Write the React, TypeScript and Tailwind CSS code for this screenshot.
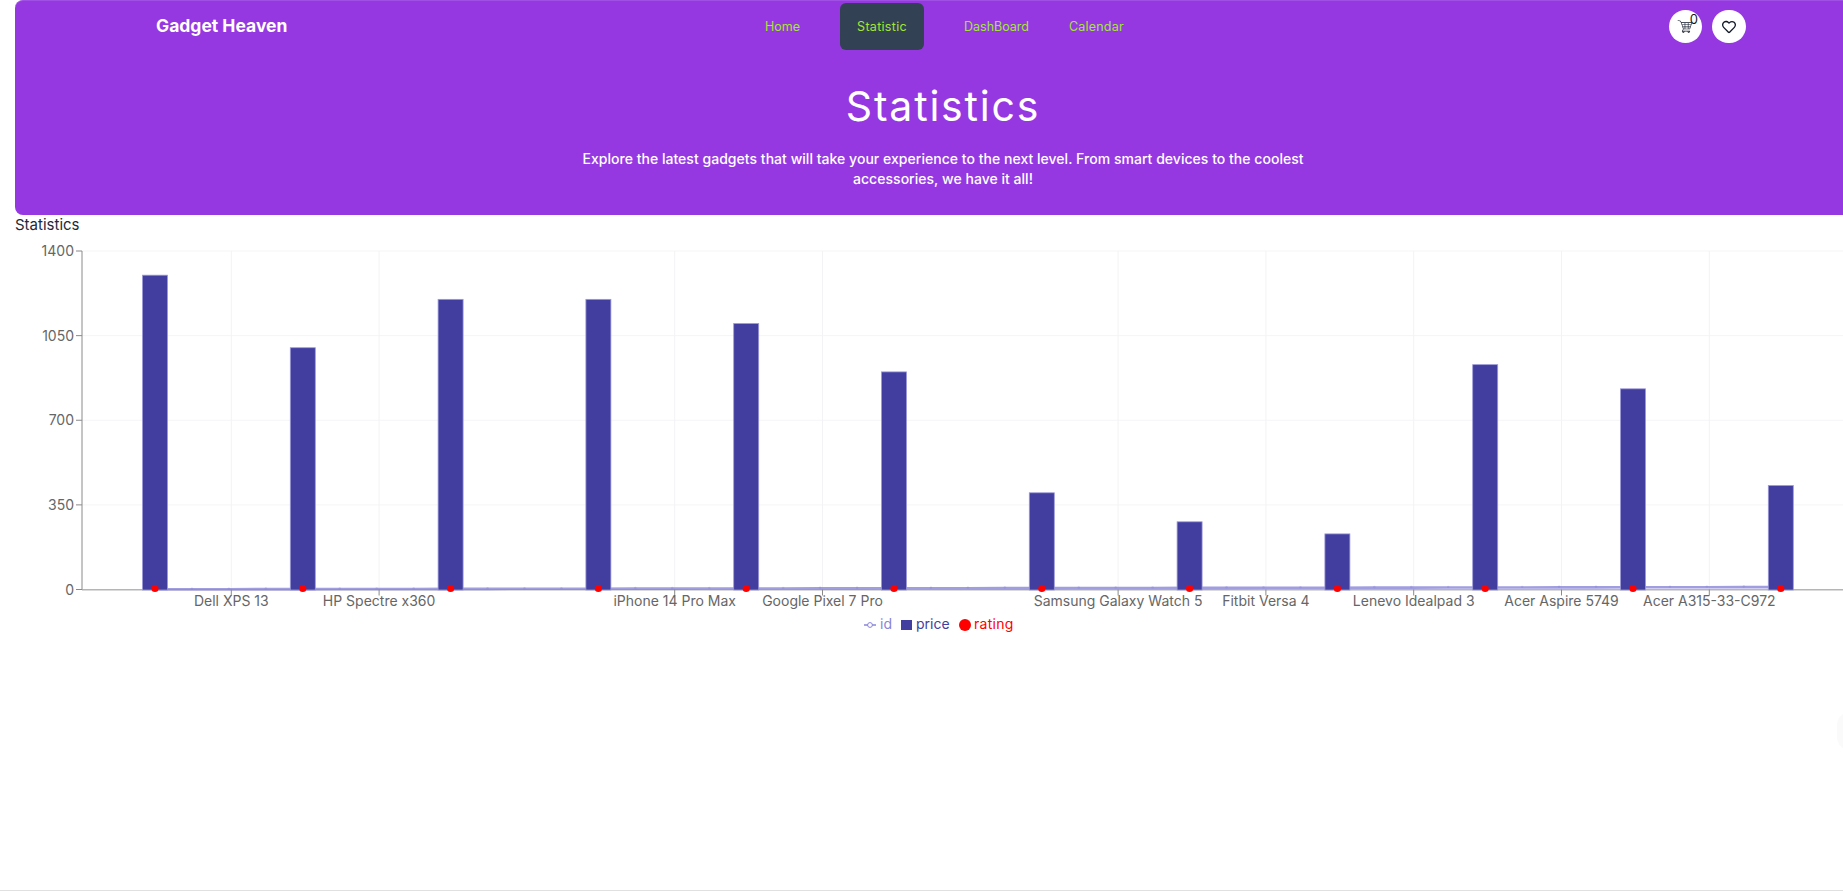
import { FaRegHeart } from "react-icons/fa";
import { GiShoppingCart } from "react-icons/gi";

const font = "font-['Inter','Noto_Sans',sans-serif]";

const bars = [1300, 1000, 1200, 1200, 1100, 900, 400, 280, 230, 930, 830, 430];
const labels = [
    "Dell XPS 13",
    "HP Spectre x360",
    "",
    "iPhone 14 Pro Max",
    "Google Pixel 7 Pro",
    "",
    "Samsung Galaxy Watch 5",
    "Fitbit Versa 4",
    "Lenevo Idealpad 3",
    "Acer Aspire 5749",
    "Acer A315-33-C972",
];
const yTicks = [0, 350, 700, 1050, 1400];

const BASE = 589.5;
const SCALE = 338.5 / 1400;
const BAND = 147.8;
const yOf = (v: number) => BASE - v * SCALE;
const barX = (i: number) => 155 + BAND * i;
const tickX = (i: number) => 231.3 + BAND * i;

// the id line has 4 points per band
const linePts = Array.from({ length: 45 }, (_, i) => ({
    x: 155 + (BAND / 4) * i,
    y: BASE - 0.2 - (2.2 * i) / 44,
}));

const Chart = () => {
    return (
        <svg width="1828" height="460" viewBox="15 236 1828 460" className="block">
            {yTicks.slice(1).map((t) => (
                <line key={t} x1="82" x2="1843" y1={yOf(t)} y2={yOf(t)} stroke="#f5f5f7" />
            ))}
            {labels.map((l, i) =>
                l ? <line key={i} x1={tickX(i)} x2={tickX(i)} y1="251" y2={BASE} stroke="#f3f3f5" /> : null,
            )}
            <line x1="82" x2="1843" y1={BASE + 0.3} y2={BASE + 0.3} stroke="#b5b5b5" strokeWidth="1.5" />
            <line x1="82" x2="82" y1="251" y2={BASE} stroke="#8a8a8a" />
            <polyline points={linePts.map((p) => `${p.x},${p.y}`).join(" ")} fill="none" stroke="#8884d8" strokeWidth="2.6" opacity="0.8" />
            {linePts.map((p, i) => (
                <circle key={i} cx={p.x} cy={p.y - 0.6} r="1.2" fill="#8884d8" opacity="0.35" />
            ))}
            {bars.map((b, i) => (
                <rect key={i} x={barX(i) - 12.5} y={yOf(b)} width="25" height={BASE - yOf(b) + 0.5} fill="#413ea0" stroke="#9c99d8" strokeWidth="0.8" />
            ))}
            {yTicks.map((t) => (
                <g key={t}>
                    <line x1="76" x2="82" y1={yOf(t)} y2={yOf(t)} stroke="#8a8a8a" />
                    <text x="74" y={yOf(t) + 5} textAnchor="end" fontSize="14" fill="#666666">
                        {t}
                    </text>
                </g>
            ))}
            {labels.map((l, i) =>
                l ? (
                    <g key={i}>
                        <line x1={tickX(i)} x2={tickX(i)} y1={BASE} y2={BASE + 6} stroke="#8a8a8a" />
                        <text x={tickX(i)} y={BASE + 16.5} textAnchor="middle" fontSize="14" fill="#666666">
                            {l}
                        </text>
                    </g>
                ) : null,
            )}
            {bars.map((_, i) => (
                <circle key={i} cx={barX(i)} cy={BASE - 1} r="3.6" fill="#ff0000" />
            ))}
            <g fontSize="14">
                <line x1="864" x2="876" y1="625" y2="625" stroke="#8884d8" strokeWidth="1.5" />
                <circle cx="870" cy="625" r="2.4" fill="#ffffff" stroke="#8884d8" />
                <text x="880" y="629" fill="#8884d8">id</text>
                <rect x="901" y="620" width="11" height="10" fill="#413ea0" />
                <text x="916" y="629" fill="#413ea0">price</text>
                <circle cx="965" cy="625" r="6" fill="#ff0000" />
                <text x="974" y="629" fill="#ff0000" letterSpacing="0.3">rating</text>
            </g>
        </svg>
    );
};

const Navbar = () => {
    return (
        <div className="flex items-start h-[52px]">
            <a className="w-[710px] pl-[141px] pt-[15px] text-[17.5px] leading-[20px] font-bold text-white">Gadget Heaven</a>
            <ul className="flex items-start text-[12.5px] text-[#a3e635] mt-[2px]">
                <li className="w-[115px] pl-[40px] pt-[14px] leading-[20px]">Home</li>
                <li className="w-[84px] h-[47px] pt-[2px] rounded-md bg-[#334155] flex items-center justify-center tracking-[0.3px]">Statistic</li>
                <li className="w-[124px] pl-[40px] pt-[14px] leading-[20px]">DashBoard</li>
                <li className="pl-[21px] pt-[14px] leading-[20px] tracking-[0.2px]">Calendar</li>
            </ul>
            <div className="ml-auto mr-[125px] mt-[9px] flex gap-[10px]">
                <button className="relative w-[33px] h-[33px] rounded-full bg-white flex items-center justify-center">
                    <GiShoppingCart size={17} color="#111827" />
                    <span className="absolute top-[2px] right-[4px] text-[13px] leading-[14px] text-[#111827]">0</span>
                </button>
                <button className="w-[34px] h-[33px] rounded-full bg-white flex items-center justify-center">
                    <FaRegHeart size={14} color="#111827" />
                </button>
            </div>
        </div>
    );
};

export default function App() {
    return (
        <div className={`${font} relative w-full h-[891px] overflow-hidden bg-white border-b border-[#e0e0e0]`}>
            <div className="ml-[15px] w-[1856px]">
                <header className="h-[215px] rounded-lg bg-[#9538e2] border-t border-[#a050e4]">
                    <Navbar />
                    <div className="flex flex-col items-center text-white">
                        <h1 className="mt-[28px] text-[41px] leading-[50px] tracking-[1.8px]">Statistics</h1>
                        <p className="mt-[18px] w-[760px] text-center text-[14px] leading-[20px] font-medium tracking-[0.03px]">
                            Explore the latest gadgets that will take your experience to the next level. From smart devices to the coolest accessories, we have it all!
                        </p>
                    </div>
                </header>
                <p className="text-[15px] leading-[19px] mb-[2px] text-[#1f2937]">Statistics</p>
                <Chart />
            </div>
            <div className="absolute right-[-20px] top-[712px] w-[26px] h-[38px] rounded-full bg-[#fafafa]" />
        </div>
    );
}
